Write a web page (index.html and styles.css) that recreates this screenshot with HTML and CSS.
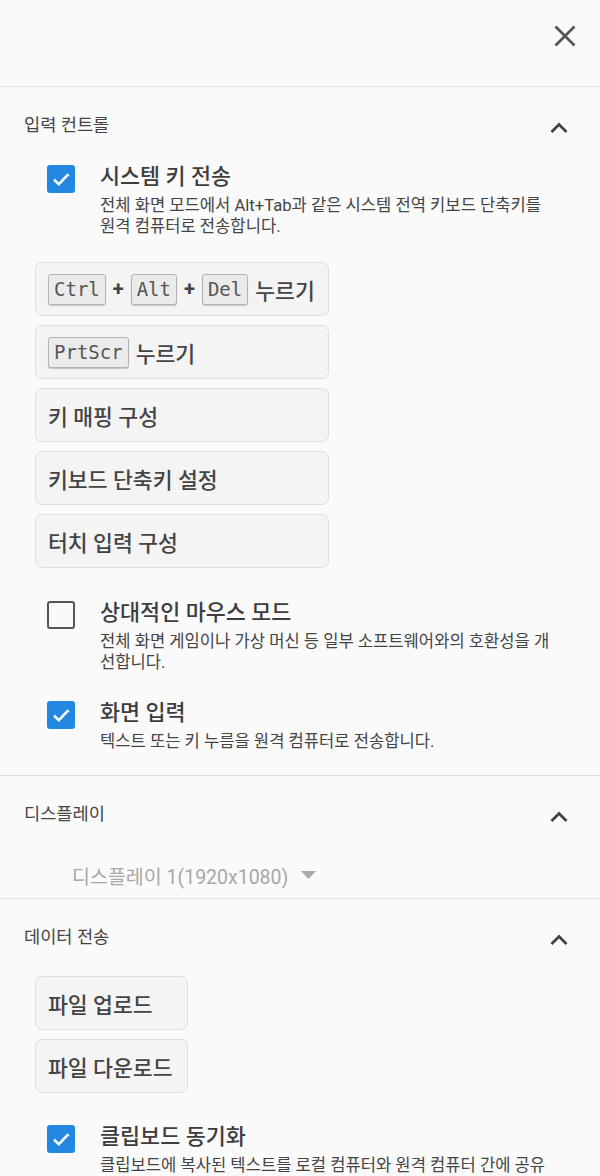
FILE: index.html
```html
<!DOCTYPE html>
<html lang="ko">
<head>
  <meta charset="UTF-8">
  <meta name="viewport" content="width=device-width, initial-scale=1.0">
  <title>원격 제어 설정</title>
  <link rel="stylesheet" href="styles.css">
</head>
<body>
  <header class="top-bar">
    <button class="close-btn" type="button" aria-label="닫기">
      <svg width="24" height="24" viewBox="0 0 24 24"><path d="M2.5 2.5 L21.5 21.5 M21.5 2.5 L2.5 21.5" stroke="#555" stroke-width="2.7" fill="none"/></svg>
    </button>
  </header>

  <section class="panel">
    <div class="panel-head">
      <span>입력 컨트롤</span>
      <svg class="chevron" width="18" height="12" viewBox="0 0 18 12"><polyline points="1.5,10 9,2.5 16.5,10" stroke="#444" stroke-width="2.8" fill="none"/></svg>
    </div>
    <div class="panel-body">
      <label class="option">
        <span class="check checked"><svg width="28" height="28" viewBox="0 0 28 28"><polyline points="7,14.5 11.8,19.2 21.5,9.2" stroke="#fff" stroke-width="2.5" fill="none"/></svg></span>
        <span class="option-text">
          <span class="option-title">시스템 키 전송</span>
          <span class="option-desc">전체 화면 모드에서 Alt+Tab과 같은 시스템 전역 키보드 단축키를 원격 컴퓨터로 전송합니다.</span>
        </span>
      </label>

      <div class="btn-group wide">
        <button class="action" type="button"><kbd>Ctrl</kbd><b>+</b><kbd>Alt</kbd><b>+</b><kbd>Del</kbd><span>누르기</span></button>
        <button class="action" type="button"><kbd>PrtScr</kbd><span>누르기</span></button>
        <button class="action" type="button">키 매핑 구성</button>
        <button class="action" type="button">키보드 단축키 설정</button>
        <button class="action" type="button">터치 입력 구성</button>
      </div>

      <label class="option">
        <span class="check"></span>
        <span class="option-text">
          <span class="option-title">상대적인 마우스 모드</span>
          <span class="option-desc">전체 화면 게임이나 가상 머신 등 일부 소프트웨어와의 호환성을 개선합니다.</span>
        </span>
      </label>

      <label class="option">
        <span class="check checked"><svg width="28" height="28" viewBox="0 0 28 28"><polyline points="7,14.5 11.8,19.2 21.5,9.2" stroke="#fff" stroke-width="2.5" fill="none"/></svg></span>
        <span class="option-text">
          <span class="option-title">화면 입력</span>
          <span class="option-desc">텍스트 또는 키 누름을 원격 컴퓨터로 전송합니다.</span>
        </span>
      </label>
    </div>
  </section>

  <section class="panel">
    <div class="panel-head">
      <span>디스플레이</span>
      <svg class="chevron" width="18" height="12" viewBox="0 0 18 12"><polyline points="1.5,10 9,2.5 16.5,10" stroke="#444" stroke-width="2.8" fill="none"/></svg>
    </div>
    <div class="display-select">
      <span>디스플레이 1(1920x1080)</span>
      <svg width="15" height="8" viewBox="0 0 15 8"><polygon points="0,0 15,0 7.5,8" fill="#aaa"/></svg>
    </div>
  </section>

  <section class="panel">
    <div class="panel-head">
      <span>데이터 전송</span>
      <svg class="chevron" width="18" height="12" viewBox="0 0 18 12"><polyline points="1.5,10 9,2.5 16.5,10" stroke="#444" stroke-width="2.8" fill="none"/></svg>
    </div>
    <div class="panel-body">
      <div class="btn-group narrow">
        <button class="action" type="button">파일 업로드</button>
        <button class="action" type="button">파일 다운로드</button>
      </div>

      <label class="option">
        <span class="check checked"><svg width="28" height="28" viewBox="0 0 28 28"><polyline points="7,14.5 11.8,19.2 21.5,9.2" stroke="#fff" stroke-width="2.5" fill="none"/></svg></span>
        <span class="option-text">
          <span class="option-title">클립보드 동기화</span>
          <span class="option-desc">클립보드에 복사된 텍스트를 로컬 컴퓨터와 원격 컴퓨터 간에 공유합니다.</span>
        </span>
      </label>
    </div>
  </section>
</body>
</html>
```

FILE: styles.css
```css
body {
  margin: 0;
  background-color: #fafafa;
  font-family: Roboto, "Noto Sans CJK KR", sans-serif;
  color: #444;
}

.top-bar {
  box-sizing: border-box;
  height: 87px;
  border-bottom: 1px solid #e2e2e2;
  display: flex;
  justify-content: flex-end;
  align-items: flex-start;
  padding: 24px 23px 0 0;
}

.close-btn {
  border: none;
  background: none;
  padding: 0;
  width: 24px;
  height: 24px;
  cursor: pointer;
}

.close-btn svg {
  display: block;
}

.panel {
  border-bottom: 1px solid #e2e2e2;
}

.panel-head {
  height: 76px;
  display: flex;
  align-items: center;
  justify-content: space-between;
  padding: 0 32px 0 24px;
  font-size: 17.6px;
  line-height: 22px;
  color: #444;
}

.chevron {
  margin-top: 6px;
}

.panel-body {
  padding: 1px 0 23px;
}

.option {
  display: flex;
  gap: 25px;
  padding: 0 48px 0 47px;
}

.check {
  flex: none;
  box-sizing: border-box;
  width: 28px;
  height: 28px;
  margin-top: 1px;
  border: 2.5px solid #555;
  border-radius: 3px;
}

.check.checked {
  border: none;
  background-color: #2288e2;
}

.check svg {
  display: block;
}

.option-text {
  display: flex;
  flex-direction: column;
}

.option-title {
  font-size: 21.8px;
  line-height: 26px;
  font-weight: 500;
  color: #3d3d3d;
}

.option-desc {
  margin-top: 5px;
  font-size: 16.6px;
  line-height: 21px;
  color: #444;
}

.btn-group {
  display: flex;
  flex-direction: column;
  gap: 9px;
  margin-left: 35px;
}

.btn-group.wide {
  width: 294px;
}

.btn-group.narrow {
  width: 153px;
}

.option + .btn-group {
  margin-top: 25px;
}

.btn-group + .option {
  margin-top: 32px;
}

.option + .option {
  margin-top: 27px;
}

.panel-body > .btn-group + .option:last-child {
  margin-top: 31px;
}

.action {
  box-sizing: border-box;
  height: 54px;
  flex: none;
  display: flex;
  align-items: center;
  gap: 7px;
  padding: 0 14px 0 12px;
  border: 1px solid #dedede;
  border-radius: 7px;
  background-color: #f4f4f4;
  font-family: inherit;
  font-size: 21.6px;
  font-weight: 500;
  color: #444;
  text-align: left;
  white-space: nowrap;
  cursor: pointer;
}

.action b {
  font-weight: 700;
  font-size: 20px;
}

kbd {
  font-family: "DejaVu Sans Mono", monospace;
  font-size: 19px;
  line-height: 29px;
  font-weight: normal;
  color: #555;
  padding: 0 5px;
  background-color: #ebebeb;
  border: 1px solid #b3b3b3;
  border-radius: 3px;
  box-shadow: 0 1px 1px rgba(0, 0, 0, 0.2);
}

.display-select {
  height: 46px;
  display: flex;
  align-items: center;
  gap: 13px;
  padding-left: 72px;
  font-size: 19.5px;
  color: #a8a8a8;
}
```
